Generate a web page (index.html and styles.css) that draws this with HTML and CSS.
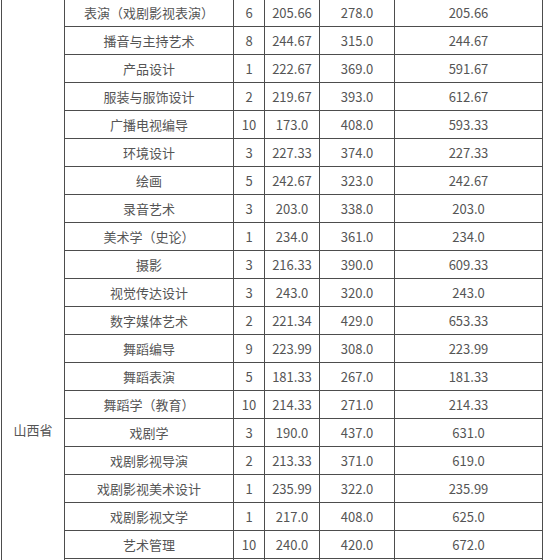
FILE: index.html
```html
<!DOCTYPE html>
<html lang="zh">
<head>
<meta charset="utf-8">
<title>分数线</title>
<link rel="stylesheet" href="styles.css">
</head>
<body>
<table class="score-table">
  <colgroup>
    <col class="c-prov"><col class="c-major"><col class="c-num"><col class="c-s1"><col class="c-s2"><col class="c-s3">
  </colgroup>
  <tbody>
    <tr><td class="prov" rowspan="21"><span>山西省</span></td><td>表演（戏剧影视表演）</td><td>6</td><td>205.66</td><td>278.0</td><td>205.66</td></tr>
    <tr><td>播音与主持艺术</td><td>8</td><td>244.67</td><td>315.0</td><td>244.67</td></tr>
    <tr><td>产品设计</td><td>1</td><td>222.67</td><td>369.0</td><td>591.67</td></tr>
    <tr><td>服装与服饰设计</td><td>2</td><td>219.67</td><td>393.0</td><td>612.67</td></tr>
    <tr><td>广播电视编导</td><td>10</td><td>173.0</td><td>408.0</td><td>593.33</td></tr>
    <tr><td>环境设计</td><td>3</td><td>227.33</td><td>374.0</td><td>227.33</td></tr>
    <tr><td>绘画</td><td>5</td><td>242.67</td><td>323.0</td><td>242.67</td></tr>
    <tr><td>录音艺术</td><td>3</td><td>203.0</td><td>338.0</td><td>203.0</td></tr>
    <tr><td>美术学（史论）</td><td>1</td><td>234.0</td><td>361.0</td><td>234.0</td></tr>
    <tr><td>摄影</td><td>3</td><td>216.33</td><td>390.0</td><td>609.33</td></tr>
    <tr><td>视觉传达设计</td><td>3</td><td>243.0</td><td>320.0</td><td>243.0</td></tr>
    <tr><td>数字媒体艺术</td><td>2</td><td>221.34</td><td>429.0</td><td>653.33</td></tr>
    <tr><td>舞蹈编导</td><td>9</td><td>223.99</td><td>308.0</td><td>223.99</td></tr>
    <tr><td>舞蹈表演</td><td>5</td><td>181.33</td><td>267.0</td><td>181.33</td></tr>
    <tr><td>舞蹈学（教育）</td><td>10</td><td>214.33</td><td>271.0</td><td>214.33</td></tr>
    <tr><td>戏剧学</td><td>3</td><td>190.0</td><td>437.0</td><td>631.0</td></tr>
    <tr><td>戏剧影视导演</td><td>2</td><td>213.33</td><td>371.0</td><td>619.0</td></tr>
    <tr><td>戏剧影视美术设计</td><td>1</td><td>235.99</td><td>322.0</td><td>235.99</td></tr>
    <tr><td>戏剧影视文学</td><td>1</td><td>217.0</td><td>408.0</td><td>625.0</td></tr>
    <tr><td>艺术管理</td><td>10</td><td>240.0</td><td>420.0</td><td>672.0</td></tr>
    <tr><td></td><td></td><td></td><td></td><td></td></tr>
  </tbody>
</table>
</body>
</html>
```
FILE: styles.css
```css
html, body {
  margin: 0;
  padding: 0;
  background: #ffffff;
  overflow: hidden;
}
body {
  font-family: "Noto Sans CJK SC", "Noto Sans", sans-serif;
  font-size: 13px;
  color: #555555;
}
.score-table {
  border-collapse: collapse;
  table-layout: fixed;
  width: 542px;
  margin: -2px 0 0 1px;
}
.c-prov { width: 63px; }
.c-major { width: 169px; }
.c-num { width: 31px; }
.c-s1 { width: 55px; }
.c-s2 { width: 75px; }
.c-s3 { width: 148px; }
.score-table td {
  border: 1px solid #4d4d4d;
  height: 27px;
  padding: 0;
  text-align: center;
  vertical-align: middle;
  line-height: 18px;
  white-space: nowrap;
}
.score-table td.prov {
  vertical-align: top;
  padding-top: 422px;
}
```
